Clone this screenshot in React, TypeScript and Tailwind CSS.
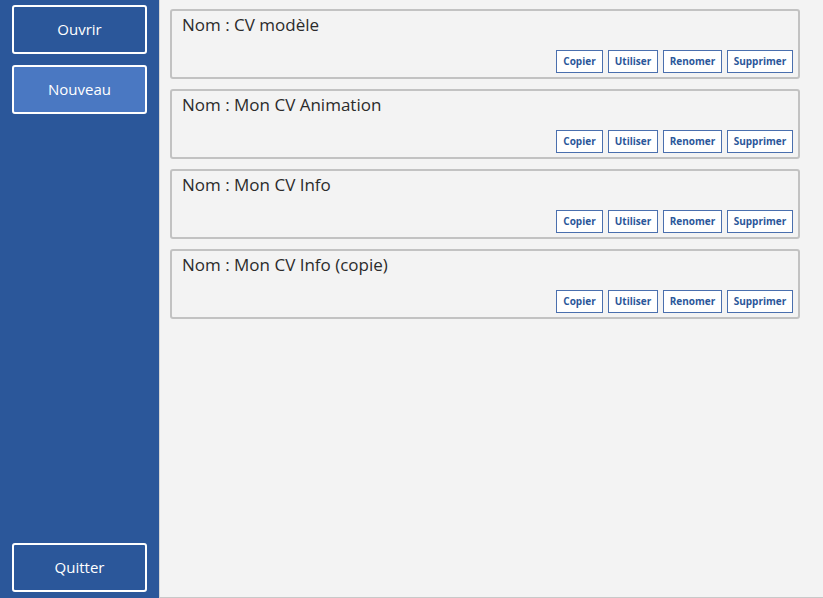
import React from "react";

const cvs = ["CV modèle", "Mon CV Animation", "Mon CV Info", "Mon CV Info (copie)"];

const actions = [
  { label: "Copier", w: "w-[47px]" },
  { label: "Utiliser", w: "w-[50px]" },
  { label: "Renomer", w: "w-[59px]" },
  { label: "Supprimer", w: "w-[66px]" },
];

const SideButton: React.FC<{ label: string; active?: boolean }> = ({ label, active }) => (
  <button
    type="button"
    className={`w-[135px] h-[49px] rounded-[3px] border-2 border-white text-white text-[15px] ${
      active ? "bg-[#4a78c2]" : "bg-[#2b579a]"
    }`}
  >
    {label}
  </button>
);

const CvCard: React.FC<{ name: string }> = ({ name }) => (
  <div className="h-[70px] rounded-[3px] border-2 border-[#c2c2c2] bg-[#f3f3f3] flex flex-col justify-between pl-[10px] pr-[5px] pb-[4px]">
    <div className="pt-[1px] text-[17px] leading-[26px] text-[#2b2b2b]">Nom : {name}</div>
    <div className="flex justify-end gap-[5px]">
      {actions.map((a) => (
        <button
          key={a.label}
          type="button"
          className={`${a.w} h-[23px] border border-[#4a6fae] bg-white text-[10px] font-bold text-[#2b579a]`}
        >
          {a.label}
        </button>
      ))}
    </div>
  </div>
);

export default function App() {
  return (
    <div
      className="flex w-[823px] h-[598px] bg-[#f3f3f3]"
      style={{ fontFamily: '"Open Sans", "Noto Sans", sans-serif' }}
    >
      <div className="w-[159px] shrink-0 bg-[#2b579a] flex flex-col items-center pt-[5px] pb-[6px]">
        <div className="flex flex-col gap-[11px]">
          <SideButton label="Ouvrir" />
          <SideButton label="Nouveau" active />
        </div>
        <div className="mt-auto">
          <SideButton label="Quitter" />
        </div>
      </div>
      <div className="flex-1 border-l border-[#d6d6d6] border-b border-b-[#c8c8c8] pl-[10px] pt-[9px] pr-[22px]">
        <div className="flex flex-col gap-[10px] w-[630px]">
          {cvs.map((c) => (
            <CvCard key={c} name={c} />
          ))}
        </div>
      </div>
    </div>
  );
}
